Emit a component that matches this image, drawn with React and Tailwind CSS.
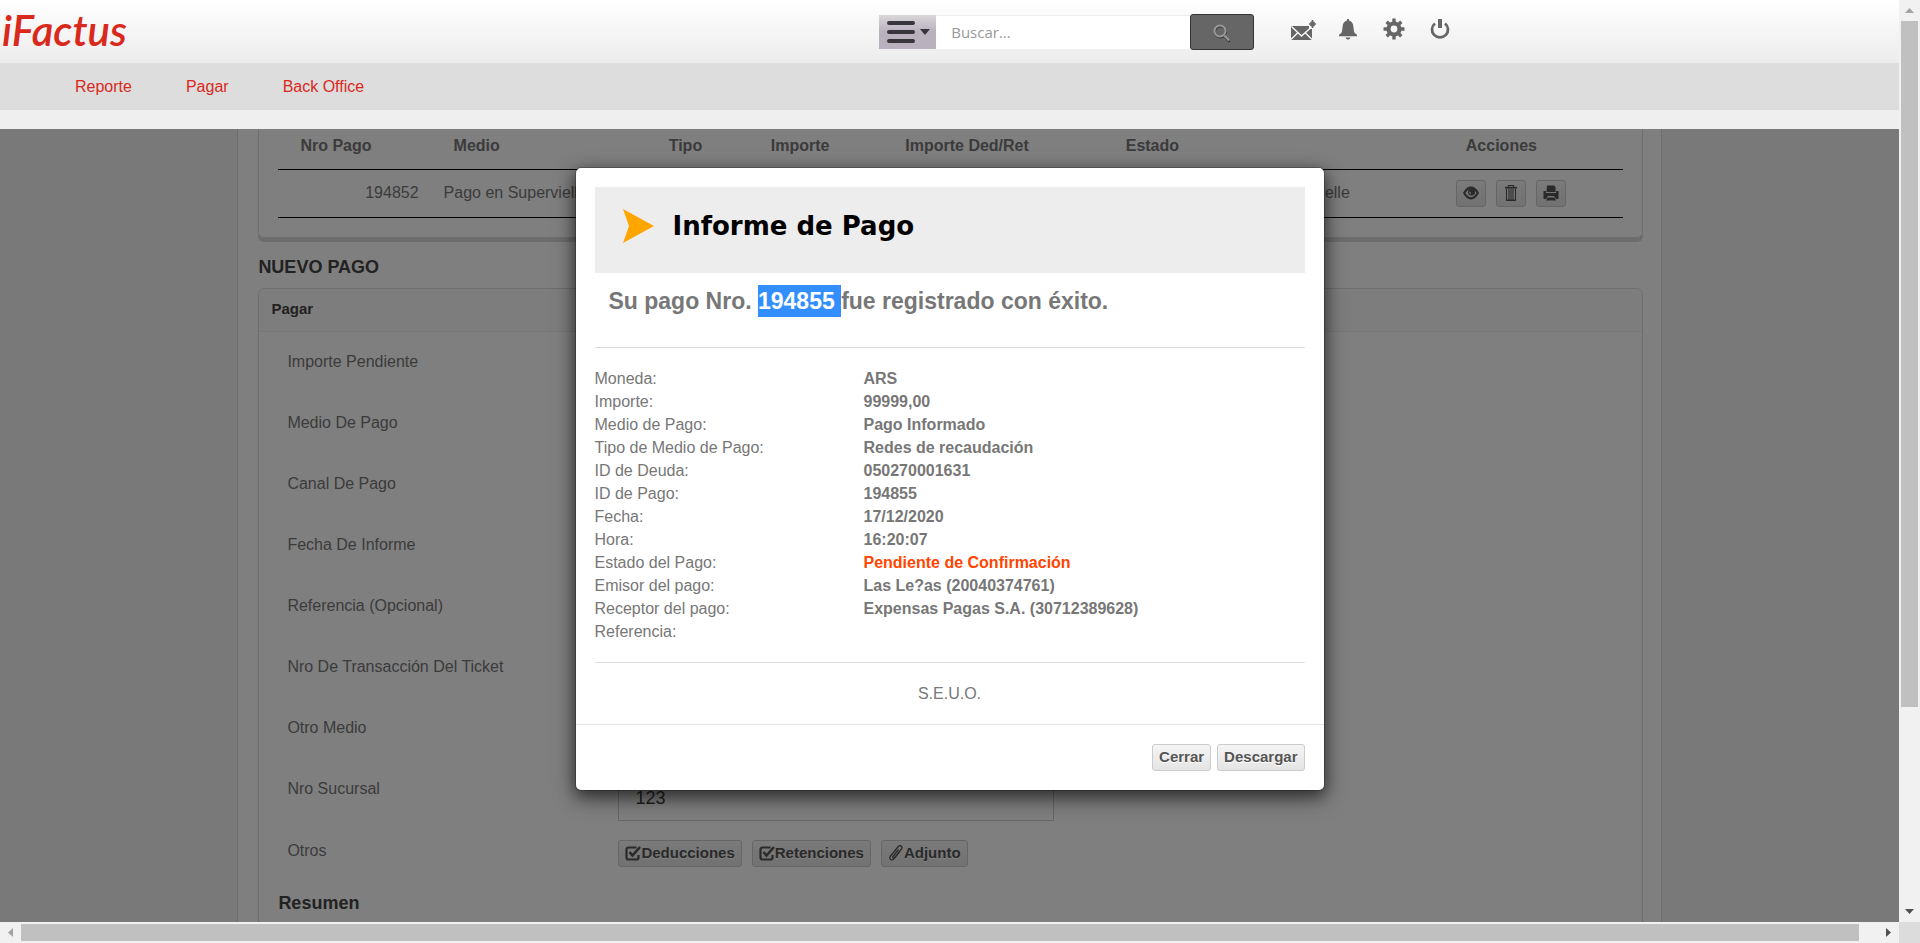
import React from "react";

const payments = [
  { id: "194852", medio: "Pago en Supervielle", tipo: "", importe: "", ded: "", estado: "Supervielle" },
];

const fields = [
  { id: "importe", label: "Importe Pendiente" },
  { id: "medio", label: "Medio De Pago" },
  { id: "canal", label: "Canal De Pago" },
  { id: "fecha", label: "Fecha De Informe" },
  { id: "referencia", label: "Referencia (Opcional)" },
  { id: "transaccion", label: "Nro De Transacción Del Ticket" },
  { id: "otro", label: "Otro Medio" },
  { id: "sucursal", label: "Nro Sucursal", value: "123" },
];

const details = [
  ["Moneda:", "ARS"],
  ["Importe:", "99999,00"],
  ["Medio de Pago:", "Pago Informado"],
  ["Tipo de Medio de Pago:", "Redes de recaudación"],
  ["ID de Deuda:", "050270001631"],
  ["ID de Pago:", "194855"],
  ["Fecha:", "17/12/2020"],
  ["Hora:", "16:20:07"],
  ["Estado del Pago:", "Pendiente de Confirmación", "text-[#ff4500]"],
  ["Emisor del pago:", "Las Le?as (20040374761)"],
  ["Receptor del pago:", "Expensas Pagas S.A. (30712389628)"],
  ["Referencia:", ""],
];

const MailIcon = () => (
  <svg width="26" height="22" viewBox="0 0 26 22" fill="#666" aria-hidden="true">
    <path d="M0 8h18v3h3v11H0z" />
    <path d="M0.500 8.500l10 9.500L20.500 9M0 21.500l7-7M21 21.500l-7-7" fill="none" stroke="#f8f8f8" strokeWidth="1.400" />
    <path d="M21.500 2v8M18 6h7M19.500 4l4 4M23.500 4l-4 4" fill="none" stroke="#666" strokeWidth="1.700" />
  </svg>
);

const BellIcon = () => (
  <svg width="20" height="22" viewBox="0 0 20 22" fill="#666" aria-hidden="true">
    <path d="M9 1h2v1.500c2.600 .6 4 2.600 4.300 5.500l.7 5.500c.4 1.500 1.500 2 3 3.200v1.500H1v-1.500c1.500-1.200 2.600-1.700 3-3.200L4.700 8C5 5.100 6.400 3.100 9 2.500z" />
    <path d="M7.500 19.500h5c-.6 1.500-1.500 2-2.500 2s-1.900-.5-2.500-2z" />
  </svg>
);

const GearIcon = () => (
  <svg width="22" height="22" viewBox="-11 -11 22 22" aria-hidden="true">
    <circle r="5.500" fill="none" stroke="#666" strokeWidth="4.200" />
    <path d="M0-10.500V-6M0 10.500V6M-10.500 0H-6M10.500 0H6M-7.300-7.300L-4.500-4.500M7.300 7.300L4.500 4.500M-7.300 7.300L-4.500 4.500M7.300-7.300L4.500-4.500" stroke="#666" strokeWidth="3.400" />
  </svg>
);

const PowerIcon = () => (
  <svg width="20" height="22" viewBox="0 0 20 22" fill="none" stroke="#666" aria-hidden="true">
    <path d="M5 5.500a8 7.800 0 1 0 10 0" strokeWidth="2.800" />
    <path d="M10 1v9" strokeWidth="4" />
  </svg>
);

const SearchIcon = () => (
  <svg width="18" height="20" viewBox="0 0 18 20" fill="none" aria-hidden="true">
    <g stroke="#3a3a3a" strokeWidth="2"><circle cx="7.500" cy="8" r="5.500" /><path d="M12 13l4.500 5" /></g>
    <g stroke="#999" strokeWidth="2"><circle cx="7" cy="7" r="5.500" /><path d="M11.500 11.500l4.500 5" /></g>
  </svg>
);

const EyeIcon = () => (
  <svg width="16" height="14" viewBox="0 0 16 14" aria-hidden="true">
    <path d="M1.200 7C3.500 3 5.700 1.700 8 1.700S12.500 3 14.800 7C12.500 11 10.300 12.300 8 12.300S3.500 11 1.200 7z" fill="none" stroke="#555" strokeWidth="2.200" />
    <circle cx="8.500" cy="6" r="3.600" fill="#555" />
    <path d="M6.300 5.500c.1 1 .7 1.800 1.700 2" fill="none" stroke="#e8e8e8" strokeWidth="1.200" />
  </svg>
);

const TrashIcon = () => (
  <svg width="14" height="18" viewBox="0 0 14 18" fill="none" stroke="#555" aria-hidden="true">
    <path d="M4.500 3V1.500h5V3" strokeWidth="1.200" />
    <path d="M1 3.700h12" strokeWidth="1.800" />
    <path d="M2.500 5v11.500h9V5M5 5v11M7 5v11M9 5v11" strokeWidth="1.100" />
    <path d="M2.500 16.300h9" strokeWidth="1.500" />
  </svg>
);

const PrinterIcon = () => (
  <svg width="16" height="16" viewBox="0 0 16 16" fill="#555" aria-hidden="true">
    <path d="M4 0.500h7l1.500 1.500V7h-9z" />
    <path d="M0.500 6h2.500v2h10V6h2.500v8h-2.500l-2-3h-6l-2 3H0.500z" />
    <path d="M4.500 12.500h7l1.500 3H3z" />
  </svg>
);

const CheckIcon = () => (
  <svg width="16" height="16" viewBox="0 0 16 16" fill="none" stroke="#555" aria-hidden="true">
    <path d="M11.500 2.500h-8a2 2 0 0 0-2 2v8a2 2 0 0 0 2 2h8a2 2 0 0 0 2-2V10" strokeWidth="2.200" />
    <path d="M4.500 7l3 3.500L15 2" strokeWidth="2.600" />
  </svg>
);

const ClipIcon = () => (
  <svg width="16" height="16" viewBox="0 0 16 16" fill="none" stroke="#555" strokeWidth="1.300" aria-hidden="true">
    <path d="M10.500 4.500L5 11.500c-.9 1.200.6 2.300 1.500 1.200l7-8.700c1.700-2.200-1.500-4.600-3.200-2.500L2.500 11c-2 2.800 1.500 5.400 3.700 2.700l6-7.500" />
  </svg>
);

const Arrow = ({ d, color }) => (
  <svg width="9" height="9" viewBox="0 0 9 9" fill={color} aria-hidden="true"><path d={d} /></svg>
);

const btn =
  "flex h-[27px] items-center justify-center rounded-[3px] border border-[#ccc] bg-linear-to-b from-[#f5f5f5] to-[#e4e4e4] text-[15px] font-bold text-[#555] [text-shadow:0_1px_0_#fff]";

function Header() {
  return (
    <header className="flex h-[63px] shrink-0 bg-linear-to-b from-white to-[#ececec]">
      <div className="w-[46.3%] shrink-0 pl-[2px]">
        <a href="#inicio" className="font-['Lato'] text-[42px] font-semibold italic leading-[60px] text-[#d9291c]">iFactus</a>
      </div>
      <form className="mt-[14px] flex h-[36px] items-center" onSubmit={(e) => e.preventDefault()}>
        <button type="button" aria-label="Menú" className="flex h-[34px] w-[57px] items-center gap-[5px] bg-linear-to-b from-[#d9d7d8] to-[#b9b1be] to-50% pl-2">
          <svg width="28" height="24" viewBox="0 0 28 24" stroke="#39363b" strokeWidth="4" strokeLinecap="round" aria-hidden="true">
            <path d="M2 3h24M2 12h24M2 21h24" />
          </svg>
          <svg width="10" height="6" viewBox="0 0 10 6" fill="#39363b" aria-hidden="true"><path d="M0 0h10L5 6z" /></svg>
        </button>
        <input aria-label="Buscar" placeholder="Buscar..." className="h-[34px] w-[254px] border-t border-[#eee] bg-white px-[15px] pb-[2px] font-['Open_Sans'] text-[15px] text-[#555] outline-none placeholder:text-[#999]" />
        <button type="submit" aria-label="Buscar" className="flex h-[36px] w-[64px] items-center justify-center rounded-[3px] border border-[#333] bg-[#666] pt-1">
          <SearchIcon />
        </button>
      </form>
      <div className="ml-[37px] mt-[18px] flex h-[22px] gap-[25px]">
        <button type="button" aria-label="Mensajes" className="w-[22px]"><MailIcon /></button>
        <button type="button" aria-label="Notificaciones" className="w-[20px]"><BellIcon /></button>
        <button type="button" aria-label="Configuración" className="w-[22px]"><GearIcon /></button>
        <button type="button" aria-label="Salir" className="w-[20px]"><PowerIcon /></button>
      </div>
    </header>
  );
}

function PaymentsTable() {
  return (
    <section className="rounded-b-md border border-t-0 border-[#ddd] px-[19px] pb-[19px] shadow-[0_4px_0_#d9d9d9]">
      <table className="w-full table-fixed border-collapse text-left">
        <colgroup>
          <col className="w-[11.4%]" /><col className="w-[16%]" /><col className="w-[7.6%]" /><col className="w-[10%]" />
          <col className="w-[16.4%]" /><col className="w-[25.3%]" /><col />
        </colgroup>
        <thead>
          <tr className="h-[40px] border-b border-black text-[#777]">
            {["Nro Pago", "Medio", "Tipo", "Importe", "Importe Ded/Ret", "Estado", "Acciones"].map((h) => (
              <th key={h} className="whitespace-nowrap pb-[6px] pl-[22px] font-bold">{h}</th>
            ))}
          </tr>
        </thead>
        <tbody>
          {payments.map((p) => (
            <tr key={p.id} className="h-[48px] border-b border-black">
              <td className="pr-[13px] text-right">{p.id}</td>
              <td className="whitespace-nowrap pl-3">{p.medio}</td>
              <td>{p.tipo}</td>
              <td>{p.importe}</td>
              <td>{p.ded}</td>
              <td className="pr-[94px] text-right">{p.estado}</td>
              <td className="pl-3">
                <div className="flex gap-[10px]">
                  <button type="button" aria-label="Ver" className={btn + " w-[30px]"}><EyeIcon /></button>
                  <button type="button" aria-label="Eliminar" className={btn + " w-[30px]"}><TrashIcon /></button>
                  <button type="button" aria-label="Imprimir" className={btn + " w-[30px]"}><PrinterIcon /></button>
                </div>
              </td>
            </tr>
          ))}
        </tbody>
      </table>
    </section>
  );
}

function PaymentForm() {
  return (
    <section className="rounded-t-md border border-[#ddd]">
      <h3 className="flex h-[43px] items-center rounded-t-md border-b border-[#eee] bg-[#fafafa] pl-3 text-[15px] font-bold text-[#444]">Pagar</h3>
      <form className="flex flex-col gap-[17px] pl-7 pt-[18px]" onSubmit={(e) => e.preventDefault()}>
        {fields.map((f) => (
          <div key={f.id} className="flex h-[44px] items-start">
            <label htmlFor={f.id} className="w-[331px] leading-6">{f.label}</label>
            <input id={f.id} defaultValue={f.value} className="h-[44px] w-[436px] border border-[#ccc] bg-white px-4 text-[18px] text-[#444]" />
          </div>
        ))}
        <div className="flex items-start pt-px">
          <span className="w-[331px] leading-6">Otros</span>
          <div className="flex gap-[10px] pt-px">
            <button type="button" className={btn + " px-[6px]"}><CheckIcon />Deducciones</button>
            <button type="button" className={btn + " px-[6px]"}><CheckIcon />Retenciones</button>
            <button type="button" className={btn + " px-[6px]"}><ClipIcon />Adjunto</button>
          </div>
        </div>
      </form>
      <h3 className="pb-10 pl-[19px] pt-6 text-[18px] font-bold leading-6 text-[#444]">Resumen</h3>
    </section>
  );
}

function PaymentDialog() {
  return (
    <div role="dialog" aria-label="Informe de Pago" className="w-[750px] rounded-md border border-black/20 bg-white bg-clip-padding text-[#777] shadow-[0_5px_15px_rgba(0,0,0,0.5),0_8px_24px_rgba(0,0,0,0.3)]">
      <div className="px-[19px] py-[19px]">
        <div className="flex h-[86px] items-center gap-[19px] bg-[#ededed] pb-[8px] pl-7">
          <svg width="31" height="34" viewBox="0 0 31 34" fill="#ffa500" aria-hidden="true"><path d="M0 0l31 17L0 34l6-17z" /></svg>
          <h2 className="font-['DejaVu_Sans'] text-[26px] font-bold text-black">Informe de Pago</h2>
        </div>
        <p className="whitespace-pre pb-[30px] pl-[14px] pt-[12px] text-[23px] font-bold leading-8">Su pago Nro. <mark className="inline-block bg-[#338fff] text-white">194855 </mark>fue registrado con éxito.</p>
        <dl className="grid grid-cols-[269px_1fr] border-y border-[#ddd] py-[19px] leading-[23px]">
          {details.map(([k, v, tone]) => (
            <React.Fragment key={k}>
              <dt>{k}</dt>
              <dd className={"font-bold " + (tone || "")}>{v}</dd>
            </React.Fragment>
          ))}
        </dl>
        <p className="pt-[19px] text-center leading-[23px]">S.E.U.O.</p>
      </div>
      <div className="flex justify-end gap-[6px] border-t border-[#e5e5e5] px-[19px] py-[19px]">
        <button type="button" className={btn + " px-[6px]"}>Cerrar</button>
        <button type="button" className={btn + " px-[6px]"}>Descargar</button>
      </div>
    </div>
  );
}

export default function App() {
  return (
    <div className="grid h-screen grid-cols-[1fr_21px] grid-rows-[1fr_21px] overflow-hidden bg-[#f1f1f1] font-['Liberation_Sans',Arial,sans-serif] text-[16px] text-[#777]">
      <div className="flex min-h-0 min-w-0 flex-col">
        <Header />
        <nav className="flex h-[47px] shrink-0 items-center gap-[54px] bg-[#ddd] pl-[75px] text-[#d9291c]">
          <a href="#reporte">Reporte</a>
          <a href="#pagar">Pagar</a>
          <a href="#backoffice">Back Office</a>
        </nav>
        <div className="h-[19px] shrink-0 bg-[#efefef]" />
        <main className="relative min-h-0 flex-1 overflow-hidden bg-[#f2f2f2]">
          <div className="mx-auto w-3/4 border-x border-[#ddd] bg-white pl-[20px] pr-[18px]">
            <PaymentsTable />
            <h2 className="pb-[9px] pt-[17px] text-[18px] font-bold leading-6 text-[#444]">NUEVO PAGO</h2>
            <PaymentForm />
          </div>
          <div className="absolute inset-0 flex items-start justify-center bg-black/50 pt-[38px]">
            <PaymentDialog />
          </div>
        </main>
      </div>
      <div className="flex flex-col items-center">
        <div className="flex h-[21px] shrink-0 items-center"><Arrow d="M4.500 2L9 7H0z" color="#a3a3a3" /></div>
        <div className="w-[17px] grow-[78] bg-[#c0c0c0]" />
        <div className="grow-[22]" />
        <div className="flex h-[21px] shrink-0 items-center"><Arrow d="M0 2h9L4.500 7z" color="#505050" /></div>
      </div>
      <div className="flex items-center">
        <div className="flex w-[21px] shrink-0 justify-center"><Arrow d="M7 0v9L2 4.500z" color="#a3a3a3" /></div>
        <div className="h-[17px] grow-[98] bg-[#c0c0c0]" />
        <div className="grow" />
        <div className="flex w-[21px] shrink-0 justify-center"><Arrow d="M2 0v9l5-4.500z" color="#505050" /></div>
      </div>
      <div className="bg-[#dcdcdc]" />
    </div>
  );
}
